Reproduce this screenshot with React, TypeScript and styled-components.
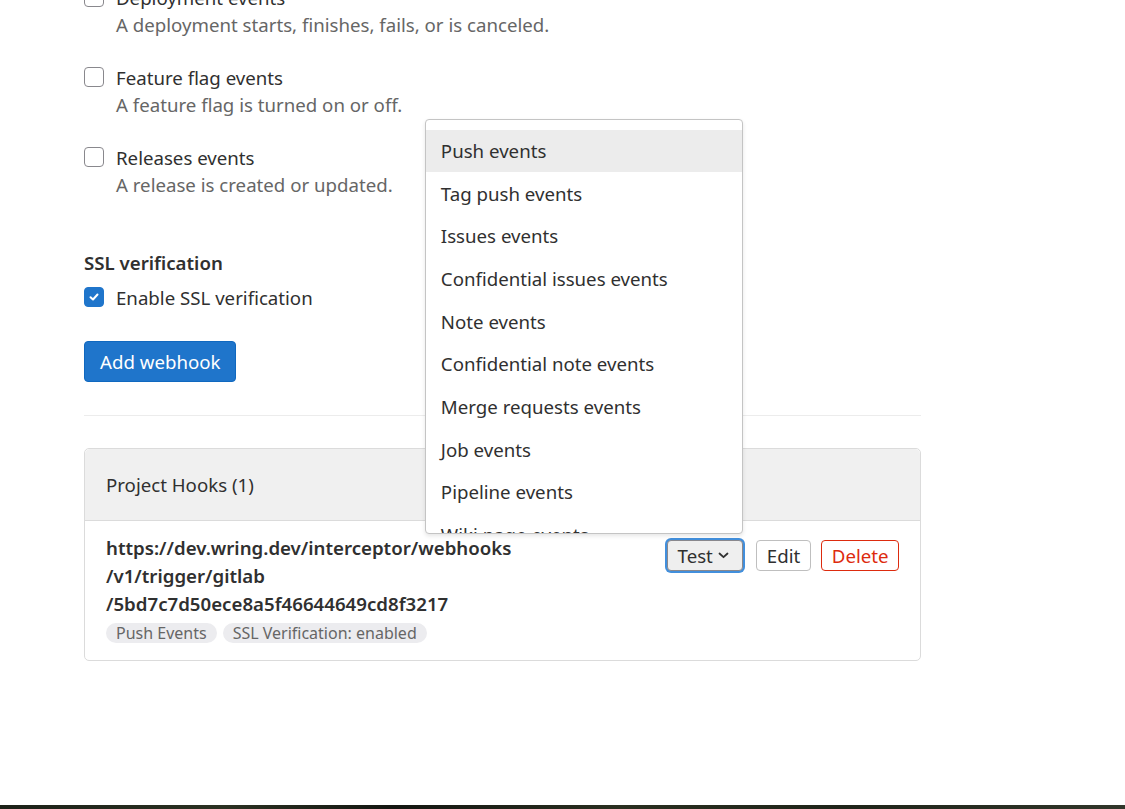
import React from "react";
import styled, { createGlobalStyle } from "styled-components";

const GlobalStyle = createGlobalStyle`
  html, body {
    margin: 0;
    padding: 0;
    background: #ffffff;
    height: 100%;
    overflow: hidden;
  }
  body {
    font-family: "Noto Sans", "Open Sans", sans-serif;
    font-size: 18.67px;
    color: #303030;
  }
  * { box-sizing: border-box; }
`;

const Page = styled.div`
  display: flex;
  flex-direction: column;
  height: 100vh;
`;

const Main = styled.main`
  flex: 1;
  overflow: hidden;
  padding-left: 84px;
`;

const Column = styled.div`
  width: 837px;
  margin-top: -16.5px;
`;

const Footer = styled.div`
  height: 4px;
  background: linear-gradient(90deg, #1c2118 0%, #2b3122 20%, #141611 35%, #2a2f20 55%, #1f2419 75%, #31362a 100%);
`;

const EventList = styled.div`
  display: flex;
  flex-direction: column;
  gap: 26px;
`;

const CheckRow = styled.label`
  display: grid;
  grid-template-columns: 20px 1fr;
  column-gap: 12px;
  line-height: 27px;
`;

const Box = styled.span<{ $checked?: boolean }>`
  width: 20px;
  height: 20px;
  margin-top: 3.5px;
  border-radius: 4px;
  border: 1px solid ${(p) => (p.$checked ? "#1f75cb" : "#89888d")};
  background: ${(p) => (p.$checked ? "#1f75cb" : "#ffffff")};
  display: flex;
  align-items: center;
  justify-content: center;
`;

const LabelText = styled.span`
  color: #303030;
`;

const HelpText = styled.span`
  grid-column: 2;
  color: #666666;
`;

const SectionTitle = styled.div`
  margin-top: 51px;
  font-weight: 600;
  line-height: 27px;
`;

const SslRow = styled(CheckRow)`
  margin-top: 8px;
`;

const PrimaryButton = styled.button`
  margin-top: 30.5px;
  height: 41px;
  padding: 0 15px;
  border-radius: 4px;
  border: 1px solid #1068bf;
  background: #1f75cb;
  color: #ffffff;
  font-family: inherit;
  font-size: 18.67px;
  line-height: 25px;
`;

const Divider = styled.hr`
  margin: 33px 0 0;
  border: 0;
  border-top: 1px solid #ececec;
`;

const Card = styled.section`
  margin-top: 32px;
  border: 1px solid #dbdbdb;
  border-radius: 5px;
`;

const CardHeader = styled.div`
  padding: 23px 21px 23px;
  line-height: 25px;
  background: #f0f0f0;
  border-bottom: 1px solid #dbdbdb;
  border-radius: 5px 5px 0 0;
`;

const HookRow = styled.div`
  display: flex;
  justify-content: space-between;
  align-items: flex-start;
  padding: 13px 21px 17px;
`;

const HookInfo = styled.div`
  display: flex;
  flex-direction: column;
`;

const UrlLine = styled.span`
  font-weight: 600;
  line-height: 28px;
`;

const Badges = styled.div`
  display: flex;
  gap: 6px;
  margin-top: 5px;
`;

const Badge = styled.span`
  background: #ececef;
  color: #666666;
  font-size: 16px;
  line-height: 20px;
  padding: 0 10px;
  border-radius: 10px;
`;

const Actions = styled.div`
  display: flex;
  gap: 10px;
  margin-top: 6px;
`;

const TestWrap = styled.div`
  position: relative;
  margin-right: 3px;
`;

const ActionButton = styled.button<{ $variant?: "default" | "danger" | "active" }>`
  height: 31px;
  padding: ${(p) =>
    p.$variant === "active" ? "0 13px 0 10px" : p.$variant === "danger" ? "0 9.5px" : "0 10px"};
  border-radius: 4px;
  font-family: inherit;
  font-size: 18.67px;
  line-height: 24px;
  display: flex;
  align-items: center;
  gap: 5px;
  background: ${(p) => (p.$variant === "active" ? "#efefef" : "#ffffff")};
  color: ${(p) => (p.$variant === "danger" ? "#dd2b0e" : "#303030")};
  border: 1px solid
    ${(p) =>
      p.$variant === "danger" ? "#dd2b0e" : p.$variant === "active" ? "#89888d" : "#bfbfbf"};
  box-shadow: ${(p) => (p.$variant === "active" ? "0 0 0 2px #428fdc" : "none")};
`;

const Menu = styled.ul`
  position: absolute;
  right: 0;
  bottom: calc(100% + 6.5px);
  width: 318px;
  height: 415px;
  margin: 0;
  padding: 10px 0;
  list-style: none;
  background: #ffffff;
  border: 1px solid #c4c4c4;
  border-radius: 4px;
  box-shadow: 0 2px 4px rgba(0, 0, 0, 0.1);
  overflow: hidden;
  z-index: 10;
`;

const MenuItem = styled.li<{ $active?: boolean }>`
  padding: 10.67px 15px;
  line-height: 21.33px;
  white-space: nowrap;
  color: #303030;
  background: ${(p) => (p.$active ? "#ececec" : "transparent")};
`;

const CheckIcon = () => (
  <svg width="12" height="12" viewBox="0 0 12 12" fill="none">
    <path d="M2.5 6.2 L5 8.5 L9.5 3.5" stroke="#ffffff" strokeWidth="2" strokeLinecap="round" strokeLinejoin="round" />
  </svg>
);

const Chevron = () => (
  <svg width="11" height="7" viewBox="0 0 11 7" fill="none">
    <path d="M1.5 1.5 L5.5 5.2 L9.5 1.5" stroke="#303030" strokeWidth="1.8" strokeLinecap="round" strokeLinejoin="round" />
  </svg>
);

const events = [
  ["Deployment events", "A deployment starts, finishes, fails, or is canceled."],
  ["Feature flag events", "A feature flag is turned on or off."],
  ["Releases events", "A release is created or updated."],
];

const menuItems = [
  "Push events",
  "Tag push events",
  "Issues events",
  "Confidential issues events",
  "Note events",
  "Confidential note events",
  "Merge requests events",
  "Job events",
  "Pipeline events",
  "Wiki page events",
];

export default function App() {
  return (
    <Page>
      <GlobalStyle />
      <Main>
        <Column>
          <EventList>
            {events.map(([label, help]) => (
              <CheckRow key={label}>
                <Box />
                <LabelText>{label}</LabelText>
                <HelpText>{help}</HelpText>
              </CheckRow>
            ))}
          </EventList>

          <SectionTitle>SSL verification</SectionTitle>
          <SslRow>
            <Box $checked>
              <CheckIcon />
            </Box>
            <LabelText>Enable SSL verification</LabelText>
          </SslRow>

          <PrimaryButton>Add webhook</PrimaryButton>

          <Divider />

          <Card>
            <CardHeader>Project Hooks (1)</CardHeader>
            <HookRow>
              <HookInfo>
                <UrlLine>https://dev.wring.dev/interceptor/webhooks</UrlLine>
                <UrlLine>/v1/trigger/gitlab</UrlLine>
                <UrlLine>/5bd7c7d50ece8a5f46644649cd8f3217</UrlLine>
                <Badges>
                  <Badge>Push Events</Badge>
                  <Badge>SSL Verification: enabled</Badge>
                </Badges>
              </HookInfo>
              <Actions>
                <TestWrap>
                  <ActionButton $variant="active">
                    Test <Chevron />
                  </ActionButton>
                  <Menu>
                    {menuItems.map((m, i) => (
                      <MenuItem key={m} $active={i === 0}>
                        {m}
                      </MenuItem>
                    ))}
                  </Menu>
                </TestWrap>
                <ActionButton>Edit</ActionButton>
                <ActionButton $variant="danger">Delete</ActionButton>
              </Actions>
            </HookRow>
          </Card>
        </Column>
      </Main>
      <Footer />
    </Page>
  );
}
